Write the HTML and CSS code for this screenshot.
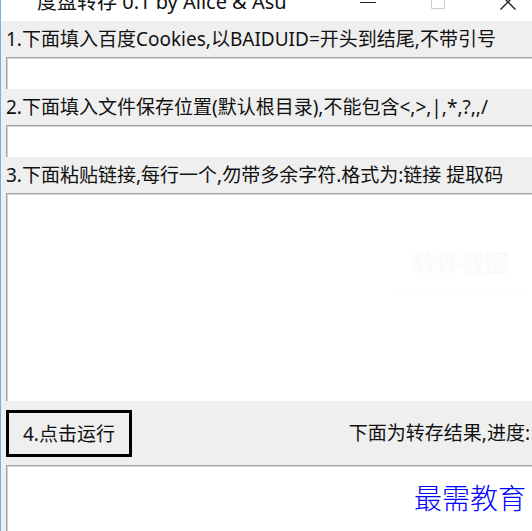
FILE: index.html
```html
<!DOCTYPE html>
<html lang="zh-CN">
<head>
  <meta charset="UTF-8">
  <title>度盘转存 0.1 by Alice &amp; Asu</title>
  <link rel="stylesheet" href="styles.css">
</head>
<body>

  <div class="window">
    <header class="titlebar">
      <h1>度盘转存 0.1 by Alice &amp; Asu</h1>
      <div class="window-buttons">
        <button type="button" aria-label="最小化">
          <svg width="16" height="16" viewBox="0 0 16 16"><path d="M0 8.5H16" stroke="#222"/></svg>
        </button>
        <button type="button" aria-label="最大化" disabled>
          <svg width="16" height="16" viewBox="0 0 16 16"><path d="M1.5 1.5H14.5V14.5H1.5Z" fill="none" stroke="#ccc"/></svg>
        </button>
        <button type="button" aria-label="关闭">
          <svg width="16" height="16" viewBox="0 0 16 16"><path d="M0.5 0.5L15.5 15.5M15.5 0.5L0.5 15.5" stroke="#222" stroke-width="1.4"/></svg>
        </button>
      </div>
    </header>

    <form class="form">
      <label for="cookies">1.下面填入百度Cookies,以BAIDUID=开头到结尾,不带引号</label>
      <input type="text" id="cookies">

      <label for="folder">2.下面填入文件保存位置(默认根目录),不能包含&lt;,&gt;,|,*,?,,/</label>
      <input type="text" id="folder">

      <label for="links">3.下面粘贴链接,每行一个,勿带多余字符.格式为:链接 提取码</label>
      <div class="links-box">
        <textarea id="links"></textarea>
        <span class="stamp">软件截图</span>
      </div>

      <div class="run-row">
        <button type="button" class="run">4.点击运行</button>
        <label for="result">下面为转存结果,进度:</label>
      </div>

      <div class="result-box">
        <textarea id="result" readonly></textarea>
        <span class="watermark">最需教育</span>
      </div>
    </form>
  </div>

</body>
</html>
```
FILE: styles.css
```css
* {
  box-sizing: border-box;
}
body {
  margin: 0;
  background-color: #efefef;
  color: #111;
  font-family: "Noto Sans", "Noto Sans CJK SC", sans-serif;
  font-size: 19px;
}
.window {
  display: flex;
  flex-direction: column;
  height: 100vh;
  overflow: hidden;
  border-left: 1px solid #78aee0;
}

/* barra de título */
.titlebar {
  display: flex;
  justify-content: space-between;
  align-items: flex-end;
  height: 21px;
  flex: none;
  padding: 0 16px 9px 36px;
  background-color: #fff;
}
.titlebar h1 {
  margin: 0;
  font-size: 20px;
  font-weight: normal;
  line-height: 20px;
}
.window-buttons {
  display: flex;
  gap: 54px;
}
.window-buttons button {
  width: 16px;
  height: 20px;
  padding: 0;
  border: none;
  background: none;
}
.window-buttons svg {
  display: block;
}

/* formulario */
.form {
  display: flex;
  flex-direction: column;
  flex: 1;
  min-height: 0;
  padding-left: 5px;
}
.form label {
  line-height: 36px;
  white-space: nowrap;
}
.form input,
.form textarea {
  display: block;
  width: 100%;
  padding: 4px;
  border: solid #a5a5a5;
  border-width: 1px 0 0 1px;
  border-radius: 0;
  background-color: #fff;
  box-shadow: inset 1px 1px #d0d0d0;
  font: inherit;
  resize: none;
  outline: none;
}
.form input {
  height: 32px;
  flex: none;
}
.links-box,
.result-box {
  position: relative;
}
.links-box {
  flex: 1;
}
.result-box {
  height: 66px;
}
.form textarea {
  height: 100%;
}
.stamp {
  position: absolute;
  right: 7px;
  top: 40px;
  padding: 0 16px;
  border-bottom: 2px solid #fcfcfc;
  color: #fafafa;
  font-size: 24px;
  font-weight: bold;
  line-height: 60px;
}
.run-row {
  display: flex;
  justify-content: space-between;
  align-items: center;
  height: 64px;
  padding-right: 2px;
}
.run {
  height: 47px;
  padding: 0 14px;
  border: 3px solid #000;
  background-color: #efefef;
  color: #111;
  font: inherit;
}
.watermark {
  position: absolute;
  right: 6px;
  top: 12px;
  color: #00f;
  font-family: KaiTi, "Noto Sans CJK SC", sans-serif;
  font-size: 28px;
  font-weight: 300;
  line-height: 40px;
}
```
